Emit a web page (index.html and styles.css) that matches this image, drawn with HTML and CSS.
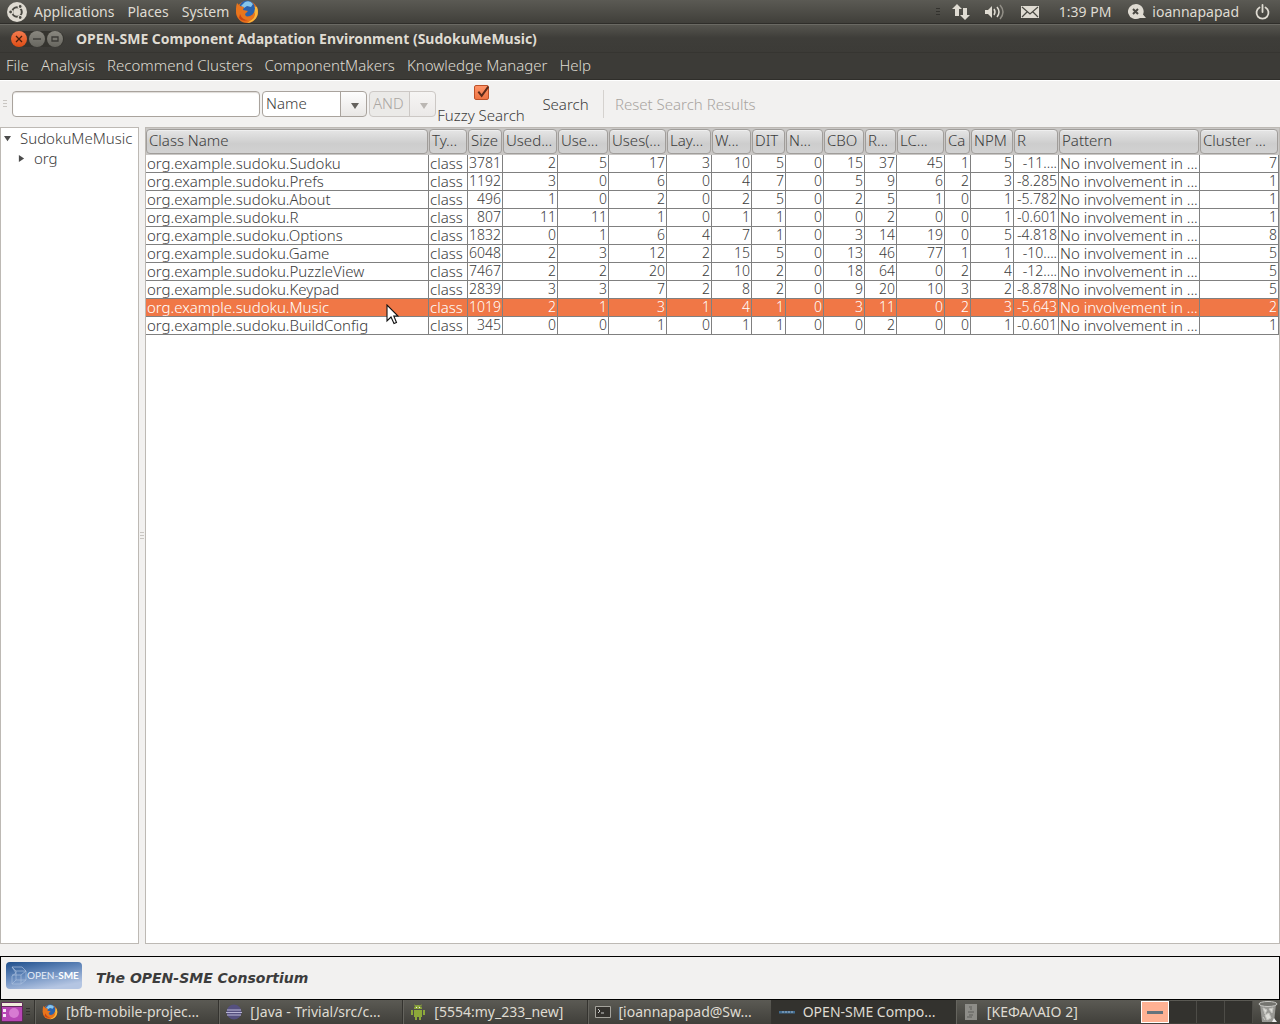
FILE: index.html
```html
<!DOCTYPE html>
<html lang="en">
<head>
<meta charset="utf-8">
<title>OPEN-SME Component Adaptation Environment (SudokuMeMusic)</title>
<link rel="stylesheet" href="styles.css">
</head>
<body>
<header class="panel">
  <svg class="ubuntu" viewBox="0 0 20 20" aria-hidden="true"><circle cx="10" cy="10" r="10" fill="#dfdbd2"/><circle cx="10" cy="10" r="4.8" fill="none" stroke="#4a4943" stroke-width="2"/><g stroke="#dfdbd2" stroke-width="1.2" fill="#4a4943"><circle cx="3.6" cy="10" r="2"/><circle cx="13.2" cy="4.5" r="2"/><circle cx="13.2" cy="15.5" r="2"/></g></svg>
  <nav class="panel-menu">
    <button>Applications</button><button>Places</button><button>System</button>
  </nav>
  <svg class="firefox" viewBox="0 0 24 24" aria-hidden="true"><use href="#fox"/></svg>
  <div class="tray">
    <span class="grip dark"></span>
    <svg class="net" width="18" height="18" viewBox="0 0 18 18" aria-hidden="true"><path fill="#dfdbd2" d="M5 1l5 5H7v7H3V6H0zM13 17l-5-5h3V5h4v7h3z"/></svg>
    <svg class="vol" width="20" height="18" viewBox="0 0 20 18" aria-hidden="true"><path fill="#dfdbd2" d="M0 7h3l4-4v12l-4-4H0z"/><path d="M9 6q2 3 0 6M12 4q4 5 0 10" fill="none" stroke="#dfdbd2" stroke-width="1.5"/><path d="M15 2q6 7 0 14" fill="none" stroke="#918e86" stroke-width="1.5"/></svg>
    <svg class="mail" width="18" height="12" viewBox="0 0 18 12" aria-hidden="true"><path fill="#dfdbd2" d="M0 0h18v12H0z"/><path d="M1 1l8 7 8-7M1 11l5-5M17 11l-5-5" fill="none" stroke="#4a4943" stroke-width="1.2"/></svg>
    <span class="clock">1:39 PM</span>
    <svg class="chat" width="18" height="16" viewBox="0 0 18 16" aria-hidden="true"><path fill="#dfdbd2" d="M8 0a8 7.500 0 0 1 7 10.500l3 3.500h-6A8 7.500 0 1 1 8 0z"/><path d="M5 5l5 5M10 5l-5 5" stroke="#4a4943" stroke-width="2"/></svg>
    <span class="user">ioannapapad</span>
    <svg class="power" width="15" height="16" viewBox="0 0 15 16" aria-hidden="true"><path d="M4.500 3.500a6 6 0 1 0 6 0M7.500 1v7" fill="none" stroke="#dfdbd2" stroke-width="1.800" stroke-linecap="round"/></svg>
  </div>
</header>

<div class="titlebar">
  <div class="controls">
    <button class="ctl close" aria-label="Close"><svg viewBox="0 0 16 16"><path d="M5 5l6 6M11 5l-6 6" stroke="#45200f" stroke-width="1.300"/></svg></button>
    <button class="ctl" aria-label="Minimize"><svg viewBox="0 0 16 16"><path d="M4 8h8" stroke="#3c3b37" stroke-width="1.400"/></svg></button>
    <button class="ctl" aria-label="Maximize"><svg viewBox="0 0 16 16"><path d="M5 6h6v4H5z" fill="none" stroke="#3c3b37" stroke-width="1.300"/></svg></button>
  </div>
  <h1>OPEN-SME Component Adaptation Environment (SudokuMeMusic)</h1>
</div>

<nav class="menubar">
  <button>File</button><button>Analysis</button><button>Recommend Clusters</button><button>ComponentMakers</button><button>Knowledge Manager</button><button>Help</button>
</nav>

<form class="toolbar">
  <span class="grip"></span>
  <input class="query" type="text" aria-label="Search text">
  <span class="combo"><select aria-label="Search field"><option>Name</option></select></span>
  <span class="combo small off"><select aria-label="Operator" disabled><option>AND</option></select></span>
  <label class="fuzzy"><span class="tick"><input type="checkbox" checked><svg viewBox="0 0 18 18" aria-hidden="true"><path d="M4 8l4 5 8-11" fill="none" stroke="#5b2b1a" stroke-width="2.400"/></svg></span>Fuzzy Search</label>
  <button type="button" class="search">Search</button>
  <span class="rule"></span>
  <button type="button" class="reset" disabled>Reset Search Results</button>
</form>

<main class="work">
  <aside class="tree">
    <ul>
      <li><svg class="arrow" viewBox="0 0 8 8" aria-hidden="true"><path d="M0 1h8L4 7z" fill="#4c4c4c"/></svg>SudokuMeMusic
        <ul><li><svg class="arrow" viewBox="0 0 8 8" aria-hidden="true"><path d="M1 0v8l6-4z" fill="#4c4c4c"/></svg>org</li></ul>
      </li>
    </ul>
  </aside>
  <div class="splitter"><span class="grip"></span></div>
  <section class="grid">
    <table>
      <colgroup><col><col class="w39"><col class="w35"><col class="w55"><col class="w51"><col class="w58"><col class="w45"><col class="w40"><col class="w34"><col class="w38"><col class="w41"><col class="w32"><col class="w48"><col class="w26"><col class="w43"><col class="w45"><col class="w141"><col class="w79"></colgroup>
      <thead><tr><th><span>Class Name</span></th><th><span>Ty...</span></th><th><span>Size</span></th><th><span>Used...</span></th><th><span>Use...</span></th><th><span>Uses(...</span></th><th><span>Lay...</span></th><th><span>W...</span></th><th><span>DIT</span></th><th><span>N...</span></th><th><span>CBO</span></th><th><span>R...</span></th><th><span>LC...</span></th><th><span>Ca</span></th><th><span>NPM</span></th><th><span>R</span></th><th><span>Pattern</span></th><th><span>Cluster ...</span></th></tr></thead>
      <tbody>
        <tr><td>org.example.sudoku.Sudoku</td><td>class</td><td>3781</td><td>2</td><td>5</td><td>17</td><td>3</td><td>10</td><td>5</td><td>0</td><td>15</td><td>37</td><td>45</td><td>1</td><td>5</td><td>-11....</td><td>No involvement in ...</td><td>7</td></tr>
        <tr><td>org.example.sudoku.Prefs</td><td>class</td><td>1192</td><td>3</td><td>0</td><td>6</td><td>0</td><td>4</td><td>7</td><td>0</td><td>5</td><td>9</td><td>6</td><td>2</td><td>3</td><td>-8.285</td><td>No involvement in ...</td><td>1</td></tr>
        <tr><td>org.example.sudoku.About</td><td>class</td><td>496</td><td>1</td><td>0</td><td>2</td><td>0</td><td>2</td><td>5</td><td>0</td><td>2</td><td>5</td><td>1</td><td>0</td><td>1</td><td>-5.782</td><td>No involvement in ...</td><td>1</td></tr>
        <tr><td>org.example.sudoku.R</td><td>class</td><td>807</td><td>11</td><td>11</td><td>1</td><td>0</td><td>1</td><td>1</td><td>0</td><td>0</td><td>2</td><td>0</td><td>0</td><td>1</td><td>-0.601</td><td>No involvement in ...</td><td>1</td></tr>
        <tr><td>org.example.sudoku.Options</td><td>class</td><td>1832</td><td>0</td><td>1</td><td>6</td><td>4</td><td>7</td><td>1</td><td>0</td><td>3</td><td>14</td><td>19</td><td>0</td><td>5</td><td>-4.818</td><td>No involvement in ...</td><td>8</td></tr>
        <tr><td>org.example.sudoku.Game</td><td>class</td><td>6048</td><td>2</td><td>3</td><td>12</td><td>2</td><td>15</td><td>5</td><td>0</td><td>13</td><td>46</td><td>77</td><td>1</td><td>1</td><td>-10....</td><td>No involvement in ...</td><td>5</td></tr>
        <tr><td>org.example.sudoku.PuzzleView</td><td>class</td><td>7467</td><td>2</td><td>2</td><td>20</td><td>2</td><td>10</td><td>2</td><td>0</td><td>18</td><td>64</td><td>0</td><td>2</td><td>4</td><td>-12....</td><td>No involvement in ...</td><td>5</td></tr>
        <tr><td>org.example.sudoku.Keypad</td><td>class</td><td>2839</td><td>3</td><td>3</td><td>7</td><td>2</td><td>8</td><td>2</td><td>0</td><td>9</td><td>20</td><td>10</td><td>3</td><td>2</td><td>-8.878</td><td>No involvement in ...</td><td>5</td></tr>
        <tr class="selected"><td>org.example.sudoku.Music<svg class="pointer" viewBox="0 0 13 21" aria-hidden="true"><path d="M1 1v16l4-4 3 6.500 2.500-1L7.800 12H12z" fill="#fff" stroke="#111" stroke-width="1.100"/></svg></td><td>class</td><td>1019</td><td>2</td><td>1</td><td>3</td><td>1</td><td>4</td><td>1</td><td>0</td><td>3</td><td>11</td><td>0</td><td>2</td><td>3</td><td>-5.643</td><td>No involvement in ...</td><td>2</td></tr>
        <tr><td>org.example.sudoku.BuildConfig</td><td>class</td><td>345</td><td>0</td><td>0</td><td>1</td><td>0</td><td>1</td><td>1</td><td>0</td><td>0</td><td>2</td><td>0</td><td>0</td><td>1</td><td>-0.601</td><td>No involvement in ...</td><td>1</td></tr>
      </tbody>
    </table>
  </section>
</main>

<footer class="about">
  <svg class="logo" width="76" height="27" viewBox="0 0 76 27" role="img" aria-label="OPEN-SME">
    <defs><linearGradient id="sky" x1="0" y1="0" x2=".5" y2="1"><stop offset="0" stop-color="#1f4f8c"/><stop offset=".5" stop-color="#6488bb"/><stop offset="1" stop-color="#b4c5e2"/></linearGradient></defs>
    <rect width="76" height="27" rx="4" fill="url(#sky)"/>
    <path d="M6 5h10l4 4H10zM10 9v9h10V9M6 5l4 6M6 22l4-4M6 22h9l5-4M6 22v-8l4-3M15 22v-9H6M15 13l5-4" fill="none" stroke="#a9bedd" stroke-width=".7"/>
    <text x="21" y="17" class="logo-text">OPEN-<tspan class="logo-bold">SME</tspan></text>
  </svg>
  <em>The OPEN-SME Consortium</em>
</footer>

<nav class="taskbar">
  <button class="desktop" aria-label="Show desktop"><svg width="24" height="22" viewBox="0 0 24 22"><rect x="1" y="1" width="22" height="20" rx="2" fill="#612a5c"/><path d="M2 6h20v14H2z" fill="#b747b5"/><circle cx="14" cy="12" r="5" fill="#d77bd2"/><path d="M2 2h20v3H2z" fill="#f1eedc"/><path d="M3 8h3v3H3zM3 13h3v3H3z" fill="#f6e8f5"/></svg></button>
  <span class="grip dark"></span>
  <div class="tasks">
    <button><svg viewBox="0 0 24 24"><g id="fox"><circle cx="12" cy="12" r="11" fill="#e66d1a"/><path d="M22 7q3 9-4 14-3 2-6 2 7-4 7-10 0-4-2-7z" fill="#f7b83d"/><circle cx="12" cy="8.500" r="8" fill="#2a62ad"/><path d="M10 2q5-2 8 2l-2 3-4-1-3 2-3-2z" fill="#86c5ea"/><path d="M2 3l3 3 4 1-1 3 5 1-3 3q1 4 5 3 4-1 5-6 1 8-6 10-8 1-12-6-2-6 0-12z" fill="#e8751d"/><path d="M5 14q2 6 8 6-6 2-9-2z" fill="#c94413"/></g></svg><span>[bfb-mobile-projec...</span></button>
    <button><svg viewBox="0 0 16 16"><circle cx="8" cy="8" r="7.500" fill="#55507f"/><path d="M1 6h14M0 8.500h16M1 11h14" stroke="#b9b5d6" stroke-width="1.200"/></svg><span>[Java - Trivial/src/c...</span></button>
    <button><svg viewBox="0 0 16 16"><path d="M4 5a4 4 0 0 1 8 0zM4 6h8v7H4zM1 6h2v5H1zM13 6h2v5h-2zM5 12h2v4H5zM9 12h2v4H9zM4 0l2 2-1 1zM12 0l-2 2 1 1z" fill="#8da83a"/><path d="M6 3h1v1H6zM9 3h1v1H9z" fill="#eee"/></svg><span>[5554:my_233_new]</span></button>
    <button><svg viewBox="0 0 16 16"><path d="M.5 2.500h15v11H.5z" fill="#35332f" stroke="#a6a49d"/><path d="M3 5l2 2-2 2M6 9h3" fill="none" stroke="#ddd" stroke-width=".9"/></svg><span>[ioannapapad@Sw...</span></button>
    <button class="active"><svg viewBox="0 0 16 16"><path d="M0 7h16v2.500H0z" fill="#426d91"/><path d="M3 8h11" stroke="#9eb5ca" stroke-dasharray="2 1"/></svg><span>OPEN-SME Compo...</span></button>
    <button><svg viewBox="0 0 16 16"><path d="M2 0h12v16H2z" fill="#8e8d88"/><path d="M6 3h3M7 5h2M5 8h6M6 11h4M4 13h5" stroke="#5f5e5a"/></svg><span>[ΚΕΦΑΛΑΙΟ 2]</span></button>
  </div>
  <div class="pager"><button class="current" aria-label="Workspace 1"><span></span></button><button aria-label="Workspace 2"></button><button aria-label="Workspace 3"></button><button aria-label="Workspace 4"></button></div>
  <svg class="trash" width="20" height="22" viewBox="0 0 20 22" aria-hidden="true"><path d="M2 3h16l-2 18H4z" fill="#989894"/><ellipse cx="10" cy="3" rx="9" ry="2.500" fill="#74746f" stroke="#c9c9c5"/><path d="M5 7l4 2-2 4zM11 8l4-1-1 5zM7 14l4-2 2 5-4 2zM5 16l2 3" fill="#deded9" stroke="#c5c5c0"/><path d="M16 17l3 4h-5z" fill="#eee"/></svg>
</nav>
</body>
</html>
```
FILE: styles.css
```css
* { box-sizing: border-box; }
html, body { height: 100%; }
body {
  margin: 0;
  display: flex;
  flex-direction: column;
  background: #f2f1f0;
  color: #3c3c3c;
  font: 300 15px/18px "Noto Sans", "Open Sans", sans-serif;
  white-space: nowrap;
  overflow: hidden;
}
button { border: 0; padding: 0; margin: 0; background: none; font: inherit; color: inherit; white-space: nowrap; }
svg { flex: none; display: block; }

.grip { flex: none; width: 4px; height: 8px; background: repeating-linear-gradient(#c9c6c2 0 1px, transparent 1px 3px); }
.grip.dark { background: repeating-linear-gradient(#33322e 0 1px, transparent 1px 3px); }

.panel, .taskbar { flex: none; height: 24px; display: flex; align-items: center; color: #dfdbd2; font-size: 14px; font-weight: 400; }
.panel { background: linear-gradient(#5b5a54, #403f3a 23px, #2f2e2a 23px); padding: 0 10px 0 7px; }
.ubuntu { width: 20px; height: 20px; }
.panel-menu { display: flex; gap: 13px; margin-left: 7px; }
.firefox { width: 24px; height: 24px; margin-left: 6px; }
.tray { margin-left: auto; display: flex; align-items: center; }
.net { margin-left: 12px; }
.vol { margin-left: 15px; }
.mail { margin-left: 16px; }
.clock { margin-left: 20px; }
.chat { margin-left: 17px; }
.user { margin-left: 6px; }
.power { margin-left: 16px; }

.titlebar { flex: none; height: 29px; display: flex; align-items: center; gap: 12px; padding: 0 11px; color: #dfdbd2; background: linear-gradient(#6a6963 0 1px, #56554f 1px, #3e3d39 14px, #3c3b37 28px, #363531 28px); }
.titlebar h1 { margin: 0; font-size: 14px; font-weight: 700; }
.controls { display: flex; gap: 2px; padding: 0 1px 0 0; border-radius: 9px; background: #35342f; }
.ctl { width: 16px; height: 16px; border-radius: 8px; background: linear-gradient(#8a8880, #67665f); }
.close { background: linear-gradient(#f47b4f, #de4d15); }

.menubar { flex: none; height: 27px; display: flex; align-items: center; gap: 12px; padding: 0 6px 2px; background: #3c3b37; color: #dfdbd2; border-bottom: 1px solid #2f2e2a; }

.toolbar { flex: none; height: 47px; margin: 0; display: flex; align-items: center; padding: 0 3px; border-top: 1px solid #fff; }
.query { width: 248px; height: 26px; margin-left: 5px; border: 1px solid #a9a39d; border-radius: 4px; background: #fff; box-shadow: inset 0 1px 1px #dedbd8; font: inherit; padding: 0 4px; }
.combo { position: relative; margin-left: 2px; width: 105px; height: 26px; }
.combo::after { content: ""; position: absolute; right: 8px; top: 12px; border: 4px solid transparent; border-top: 6px solid #65625e; border-bottom: 0; pointer-events: none; }
.combo select { appearance: none; width: 100%; height: 100%; padding: 0 3px 2px; border: 1px solid #a9a39d; border-radius: 4px; color: #3c3c3c; opacity: 1; font: inherit; background: linear-gradient(90deg, #a9a39d 1px, transparent 1px) right / 26px 100% no-repeat, linear-gradient(#fdfdfd, #e9e7e5) right / 26px 100% no-repeat, #fff; }
.combo.small { width: 67px; }
.combo.off select { color: #aaa6a2; border-color: #ccc8c5; background: linear-gradient(90deg, #ccc8c5 1px, transparent 1px) right / 26px 100% no-repeat, linear-gradient(#f6f5f4, #ebe9e8) right / 26px 100% no-repeat, #ebeae8; }
.combo.off::after { border-top-color: #bbb7b3; }
.fuzzy { display: flex; flex-direction: column; align-items: center; gap: 6px; width: 90px; }
.tick { position: relative; width: 15px; height: 15px; }
.tick input { appearance: none; display: block; margin: 0; width: 15px; height: 15px; border: 1px solid #bd5128; border-radius: 2px; background: linear-gradient(#ff9468, #ef7443); }
.tick svg { position: absolute; left: 0; top: 0; width: 17px; height: 15px; }
.search { width: 77px; padding-left: 2px; }
.rule { width: 1px; height: 28px; background: #d5d2cf; }
.reset { margin-left: 11px; color: #a8a4a0; }

.work { flex: 1; min-height: 0; display: flex; }
.tree { width: 139px; border: 1px solid #bdb9b4; background: #fff; }
.tree ul { list-style: none; margin: 0; padding: 0; }
.tree > ul { padding-left: 3px; }
.tree ul ul { padding-left: 14px; }
.tree li { line-height: 20px; }
.arrow { display: inline-block; width: 7px; height: 7px; margin-right: 9px; vertical-align: 2px; }
.splitter { width: 6px; display: flex; align-items: center; justify-content: center; }
.grid { flex: 1; min-width: 0; border: 1px solid #bdb9b4; background: #fff; }
table { width: 100%; table-layout: fixed; border-spacing: 0; }
th { height: 27px; padding: 1px 0; background: #c9c7c5; font-weight: 300; text-align: left; }
th span { display: block; height: 25px; margin: 0 1px 0 0; padding: 0 0 0 2px; line-height: 21px; border: 1px solid #a09d9a; border-radius: 4px; background: linear-gradient(#e6e6e6, #cdcdcd 60%, #d2d2d2); box-shadow: inset 0 1px 0 #efefef; overflow: hidden; }
td { height: 18px; padding: 0 1px 1px; line-height: 16px; border-right: 1px solid #808080; border-bottom: 1px solid #808080; text-align: right; font-size: 14px; }
td:first-child, td:nth-child(2), td:nth-child(17) { text-align: left; font-size: 15px; }
.selected td { background: #f07746; color: #fff; }
.selected td:first-child { position: relative; }
.pointer { position: absolute; left: 240px; top: 5px; width: 13px; height: 21px; }
.w26 { width: 26px; } .w32 { width: 32px; } .w34 { width: 34px; } .w35 { width: 35px; }
.w38 { width: 38px; } .w39 { width: 39px; } .w40 { width: 40px; } .w41 { width: 41px; }
.w43 { width: 43px; } .w45 { width: 45px; } .w48 { width: 48px; } .w51 { width: 51px; }
.w55 { width: 55px; } .w58 { width: 58px; } .w79 { width: 79px; } .w141 { width: 141px; }

.about { flex: none; height: 44px; margin-top: 12px; display: flex; align-items: center; gap: 14px; padding: 5px; border: 1px solid #000; }
.logo { align-self: flex-start; }
.about em { font: italic 700 14px/18px "DejaVu Sans", sans-serif; }
.logo-text { font: 400 10px "Lato", sans-serif; fill: #e6edf7; }
.logo-bold { font-weight: 700; fill: #fff; }

.taskbar { background: linear-gradient(#5b5a54, #403f3a); padding-right: 2px; }
.taskbar > .grip { margin: 0 4px 0 2px; }
.desktop { width: 24px; }
.tasks { flex: 1; min-width: 0; height: 24px; display: flex; }
.tasks button { flex: 1; min-width: 0; display: flex; align-items: center; gap: 8px; padding: 0 7px; border-left: 1px solid #34332f; box-shadow: inset 1px 0 0 #65645e; }
.tasks button.active { background: #33322e; box-shadow: none; }
.tasks svg { width: 16px; height: 16px; }
.pager { margin: 0 5px 0 2px; height: 22px; display: flex; background: #33322e; }
.pager button { width: 28px; border-right: 1px solid #4d4c47; }
.pager button.current { display: flex; align-items: center; justify-content: center; border: 1px solid #fff; background: #ffb193; }
.current span { width: 16px; height: 3px; background: #65737c; }
```
